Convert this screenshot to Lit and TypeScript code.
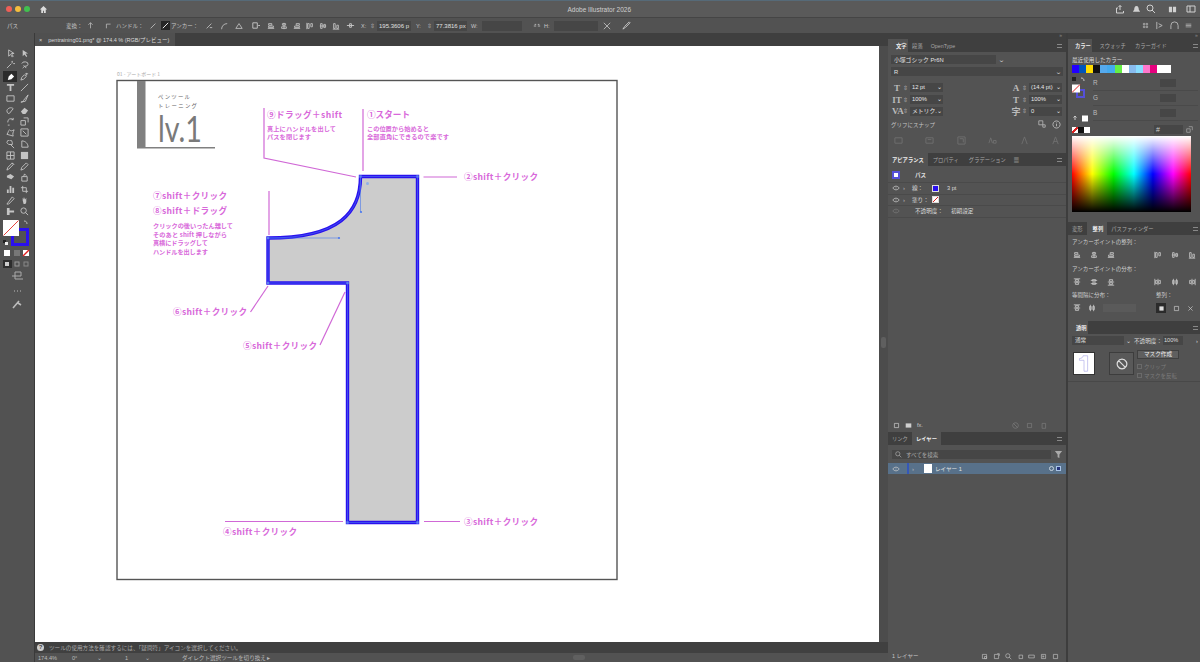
import {LitElement, html, css, svg} from 'lit';
import {customElement} from 'lit/decorators.js';

const icon = (d: string, size = 9, solid = false) => html`<svg class="ic ${solid ? 'solid' : ''}" viewBox="0 0 10 10" width=${size} height=${size}><path d=${d}></path></svg>`;
const EYE = 'M1 5c2-3 6-3 8 0-2 3-6 3-8 0zM4.500 5h1';

// tool pairs, top to bottom
const TOOLS: [string, boolean][] = [
  ['M3 1v7l2-2 2 3 1-1-2-3h3z', false], ['M3 1v7l2-2 2 3 1-1-2-3h3z', true],
  ['M1 9l5-5M7 1v2M8 4h2M6 2l1 1', false], ['M2 4a3.5 2.5 0 1 1 3 3l-2 2M4 6l3 3', false],
  ['M2 9l1-4 3-3 3 3-3 3z', true], ['M1 9l1-3 3-3 2 2-3 3zM7 1v3M6 2h3', false],
  ['M1 1h8v2H6v6H4V3H1z', true], ['M1 9L9 1', false],
  ['M1 2h8v6H1z', false], ['M1 9c2 0 3-1 3-2l5-6-3 7z', false],
  ['M1 5c1-3 5-4 7-2L4 8C3 9 1 8 1 5z', false], ['M1 6l4-4 4 3-3 4H3z', true],
  ['M2 6a3.5 3.5 0 0 1 6-3M8 1v2H6M2 9h2', false], ['M1 4h5v5H1zM4 1h5v5', false],
  ['M1 7c2-2 1-4 3-5 1 2 3 1 5 0-1 3-2 4-1 7-2-1-5-1-7-2z', false], ['M1 1h8v8H1zM3 3l4 4', false],
  ['M1 3a3 3 0 0 1 6 0v2H3zM5 5l4 4', false], ['M2 1c4 0 7 3 7 7H2z', false],
  ['M1 1h8v8H1zM1 5h8M5 1v8', false], ['M1 1h8v8H1z', true],
  ['M1 9l2-1 5-5-1-2-5 5zM7 1l2 2', false], ['M1 9l1-3 5-5 2 2-5 5z', false],
  ['M1 3l4-2 4 3-3 3-5-2zM4 7l4 2', true], ['M2 9h6V4H2zM4 4l1-3 2 2', false],
  ['M1 9V5h2v4zM4 9V1h2v8zM7 9V3h2v6z', true], ['M3 1v6h6M1 3h6v6', false],
  ['M1 9l6-8 2 2-6 6z', false], ['M3 5V2l1 2V1l1 3V1l1 3 1-2v5l-1 2H4z', true],
  ['M1 1h3v3h5v2H4v3H1z', true], ['M1 4a3 3 0 1 0 6 0 3 3 0 1 0-6 0M6 6l3 3', false],
];

const ALIGN: string[] = [
  'M1 8h8M2 2h4v2H2zM2 5h6v2H2z', 'M5 1v8M3 2h4v2H3zM2 6h6v2H2z', 'M1 8h8M4 2h4v2H4zM2 5h6v2H2z',
  'M1 1v8M2 2h2v6H2zM6 2h2v4H6z', 'M1 5h8M2 2h2v6H2zM6 3h2v4H6z', 'M1 9h8M2 2h2v6H2zM6 4h2v4H6z',
];
const DIST: string[] = [
  'M1 1h8M1 5h8M3 2h4v2H3zM3 6h4v2H3z', 'M1 3h8M1 7h8M3 2h4v2H3zM3 6h4v2H3z', 'M1 5h8M1 9h8M3 2h4v2H3zM3 6h4v2H3z',
  'M1 1v8M5 1v8M2 3h2v4H2zM6 3h2v4H6z', 'M3 1v8M7 1v8M2 3h2v4H2zM6 3h2v4H6z', 'M5 1v8M9 1v8M2 3h2v4H2zM6 3h2v4H6z',
];
const SWATCHES = ['#2200ff', '#0055bb', '#ffdd00', '#111111', '#55aaee', '#44aaee', '#66ee44', '#ffffff', '#88bbee', '#88ddff', '#ff77cc', '#e6007e', '#ffffff', '#ffffff'];

// pink notes on the artboard: x, baseline, width, size, text
const NOTES: [number, number, number, number, string][] = [
  [267, 118, 75, 8.6, '⑨ドラッグ＋shift'], [367, 118, 43, 8.6, '①スタート'],
  [267, 131, 69, 6.2, '真上にハンドルを出して'], [267, 139, 44, 6.2, 'パスを閉じます'],
  [367, 131, 62, 6.2, 'この位置から始めると'], [367, 139, 82, 6.2, '全部直角にできるので楽です'],
  [153, 199, 74, 8.6, '⑦shift＋クリック'], [153, 214, 74, 8.6, '⑧shift＋ドラッグ'],
  [153, 228, 80, 6.2, 'クリックの後いったん離して'], [153, 236.5, 74, 6.2, 'そのあと shift 押しながら'],
  [153, 245, 55, 6.2, '真横にドラッグして'], [153, 254, 55, 6.2, 'ハンドルを出します'],
  [173, 315, 74, 8.6, '⑥shift＋クリック'], [243, 349, 74, 8.6, '⑤shift＋クリック'],
  [223, 535, 74, 8.6, '④shift＋クリック'], [464, 525, 74, 8.6, '③shift＋クリック'], [464, 180, 74, 8.6, '②shift＋クリック'],
];
const LEADERS = ['M264 108V158L356 177', 'M363 109V171', 'M423.5 177H457', 'M269 191V235', 'M268 286L250.5 312', 'M345 292L320 345', 'M225 521.5H343', 'M424 521.5H460'];
const PATH_D = 'M360.5 176.5H417.5V522.5H347.5V283H268V238C340 238 360.5 212 360.5 176.5Z';

@customElement('app-root')
export class AppRoot extends LitElement {
  static styles = css`
    :host { display: block; width: 1200px; height: 662px; overflow: hidden; background: #535353; color: #d6d6d6;
      font: 5.5px "Liberation Sans", "Noto Sans CJK JP", sans-serif; }
    * { box-sizing: border-box; }
    .ic { display: block; flex: none; fill: none; stroke: currentColor; stroke-width: 1; }
    .ic.solid { fill: currentColor; stroke: none; }

    .titlebar { height: 17px; background: #5a5a5a; border-top: 1px solid #566a78; display: flex; align-items: center; padding-left: 4px; }
    .light { width: 6px; height: 6px; border-radius: 50%; margin: 0 1.6px; }
    .home { margin-left: 7px; color: #dcdcdc; }
    .title { flex: 1; text-align: center; font-size: 6.5px; color: #cfcfcf; padding-left: 36px; }
    .title-icons { display: flex; align-items: center; margin-right: 4px; color: #d0d0d0; }

    .control { height: 16px; background: #525252; border-top: 1px solid #454545; display: flex; align-items: center; padding-left: 7px; white-space: nowrap; color: #c8c8c8; }
    .c-icons { display: flex; align-items: center; gap: 4px; }
    .cf { height: 10px; background: #464646; color: #e0e0e0; padding: 0 2px; line-height: 10px; font-size: 6px; }
    .dark { background: #262626; color: #fff; }

    .main { display: flex; height: 629px; }
    .tools { width: 35px; background: #525252; border-right: 1px solid #3a3a3a; flex: none; display: flex; flex-direction: column; align-items: center; }
    .tool-grid { display: grid; grid-template-columns: 14px 14px; grid-auto-rows: 11.3px; margin-top: 15px; color: #c4c4c4; }
    .tool { display: flex; align-items: center; justify-content: center; }
    .tool.on { background: #2b2b2b; color: #fff; }

    .center { width: 853px; flex: none; display: flex; flex-direction: column; }
    .tabstrip { height: 13px; background: #3f3f3f; display: flex; }
    .doc-tab { width: 140px; background: #505050; display: flex; align-items: center; gap: 6px; padding-left: 4px; color: #d8d8d8; white-space: nowrap; font-size: 5.5px; }
    .canvas-wrap { flex: 1; display: flex; min-height: 0; }
    .canvas { width: 844px; height: 596px; background: #fff; display: block; flex: none; }
    .vscroll { flex: 1; background: #4c4c4c; display: flex; align-items: center; justify-content: center; padding-bottom: 4px; }
    .thumb { width: 5px; height: 11px; background: #5f5f5f; border-radius: 2px; }
    .help { height: 11px; background: #404040; display: flex; align-items: center; gap: 5px; padding-left: 2px; font-size: 5.6px; color: #aaa; flex: none; }
    .help-dot { width: 7px; height: 7px; border-radius: 50%; background: #cfcfcf; color: #404040; font-size: 6px; line-height: 7px; text-align: center; font-weight: 700; }
    .status { height: 9px; background: #525252; display: flex; align-items: center; font-size: 5.6px; color: #bbb; padding-left: 3px; flex: none; white-space: nowrap; }
    .hthumb { width: 12px; height: 5px; background: #606060; border-radius: 2px; margin-left: 303px; }

    .col1 { width: 180px; flex: none; display: flex; flex-direction: column; border-right: 2px solid #3d3d3d; background: #535353; }
    .col2 { flex: 1; display: flex; flex-direction: column; background: #535353; }
    .strip { height: 6px; background: #3f3f3f; flex: none; text-align: right; font-size: 5px; line-height: 5px; padding-right: 4px; color: #888; }
    .tabs { height: 13px; background: #3f3f3f; display: flex; align-items: stretch; flex: none; color: #a8a8a8; font-size: 5.3px; }
    .tab { padding: 0 4px; display: flex; align-items: center; white-space: nowrap; }
    .tab.on { background: #535353; color: #eee; font-weight: 700; }
    .tab.lead { padding-left: 8px; padding-right: 1.500px; }
    .menu { margin-left: auto; width: 5px; height: 4px; margin-top: 5px; margin-right: 4px; border-top: 1px solid #888; border-bottom: 1px solid #888; }

    .type-body { height: 101px; padding: 3px 3px 0; display: flex; flex-direction: column; }
    .select-row { display: flex; align-items: center; gap: 3px; margin-bottom: 3px; }
    .select { height: 9px; background: #464646; color: #e2e2e2; display: flex; align-items: center; padding: 0 2px 0 3px; font-size: 5.8px; justify-content: space-between; white-space: nowrap; }
    .chev { color: #ccc; font-size: 6px; line-height: 6px; transform: scaleX(1.4); }
    .m-row { height: 11.7px; display: flex; align-items: center; }
    .m-icon { width: 10px; margin-left: 1px; font: 700 9px "Liberation Serif", "Noto Sans CJK JP", serif; color: #bbb; text-align: center; white-space: nowrap; }
    .step { width: 6px; margin: 0 1px; color: #bbb; }
    .m-field { width: 33px; height: 9px; background: #464646; color: #e8e8e8; font-size: 5.8px; line-height: 9px; padding: 0 1px 0 2px; display: flex; justify-content: space-between; white-space: nowrap; }
    .m-spacer { width: 67px; flex: none; }
    .snap { height: 13px; margin-top: 1px; display: flex; align-items: center; justify-content: space-between; padding: 0 2px 0 0; color: #c4c4c4; }
    .snap-icons { display: flex; gap: 6px; color: #bbb; }
    .glyphs { display: flex; justify-content: space-between; margin-top: 5px; color: #717171; padding: 0 3px; }

    .appearance { height: 266px; flex: none; display: flex; flex-direction: column; }
    .a-row { height: 11.5px; display: flex; align-items: center; border-bottom: 1px solid #4a4a4a; padding-left: 4px; color: #dcdcdc; font-size: 5.6px; white-space: nowrap; }
    .a-first { height: 15px; margin-top: 2px; }
    .eye { width: 8px; color: #c8c8c8; flex: none; }
    .eye.off { color: #777; }
    .twist { width: 6px; margin-left: 3px; color: #bbb; font-size: 6px; flex: none; }
    .swatch-sm { width: 7px; height: 7px; border: 1px solid #ddd; flex: none; }
    .a-label-s { width: 20px; margin-left: 3px; flex: none; }
    .a-foot { margin-top: auto; height: 14px; display: flex; align-items: center; padding: 0 5px; gap: 5px; color: #cfcfcf; }
    .trash { margin-left: auto; display: flex; gap: 7px; margin-right: 14px; color: #7c7c7c; }

    .layers { flex: 1; display: flex; flex-direction: column; min-height: 0; }
    .search { height: 9px; margin: 5px 3px 4px 4px; display: flex; align-items: center; gap: 3px; font-size: 5.5px; color: #aaa; }
    .search-box { flex: 1; height: 9px; background: #464646; display: flex; align-items: center; gap: 4px; padding-left: 3px; }
    .layer { height: 11px; background: #58718a; display: flex; align-items: center; color: #e2e2e2; font-size: 5.6px; padding-left: 4px; }
    .layer-bar { width: 2px; height: 11px; background: #3557b8; margin-left: 7px; }
    .thumb-sm { width: 8px; height: 9px; background: #fff; margin: 0 3px 0 6px; }
    .target { margin-left: auto; width: 5px; height: 5px; border-radius: 50%; border: 1px solid #c8d4e0; margin-right: 2px; }
    .sel { width: 5px; height: 5px; background: #26357d; border: 1px solid #a9c4e8; margin-right: 5px; }
    .l-foot { margin-top: auto; height: 12px; display: flex; align-items: center; padding-left: 4px; color: #c8c8c8; font-size: 5.5px; }
    .l-foot-icons { display: flex; gap: 4.700px; margin-left: 63px; color: #bbb; }

    .color-body { height: 170px; padding: 3px 4px 0; display: flex; flex-direction: column; }
    .recent { height: 10px; line-height: 10px; font-size: 5.6px; color: #d8d8d8; }
    .swatches { display: flex; margin-bottom: 3px; }
    .sw { width: 7.1px; height: 7.5px; flex: none; }
    .rgb { display: flex; height: 50px; }
    .rgb-rows { flex: 1; display: grid; grid-auto-rows: 15px; margin-left: 5px; }
    .rgb-row { display: flex; align-items: center; justify-content: space-between; color: #bbb; font-size: 6.4px; border-bottom: 1px solid #4a4a4a; }
    .rgb-val { width: 16px; height: 8px; background: #464646; margin-right: 22px; }
    .hex { display: flex; align-items: center; height: 8px; }
    .hex-f { width: 29px; height: 9px; background: #464646; margin-left: 64px; color: #ccc; font-size: 7px; line-height: 9px; padding-left: 2px; }
    .picker { height: 76px; width: 119px; margin-top: 2px; background: linear-gradient(to bottom, #fff 0, rgba(255,255,255,0) 50%, rgba(0,0,0,0) 50%, #000 100%), linear-gradient(to right, #f00, #ff0 17%, #0f0 35%, #0ff 52%, #00f 68%, #f0f 85%, #f00); }

    .align-body { height: 86px; padding: 2px 4px 0; color: #cfcfcf; font-size: 5.5px; }
    .a-label { height: 10px; line-height: 10px; white-space: nowrap; }
    .a-icons { height: 16px; display: flex; align-items: center; gap: 9px; padding-left: 1px; color: #c8c8c8; }
    .a-gap { width: 21px; flex: none; }
    .dist-row { height: 16px; display: flex; align-items: center; gap: 7px; padding-left: 1px; color: #c8c8c8; }
    .dist-fake { width: 33px; height: 8px; background: #5a5a5a; flex: none; }
    .dist-on { width: 10px; height: 10px; background: #2b2b2b; display: flex; align-items: center; justify-content: center; color: #ddd; margin-left: 13px; flex: none; }

    .opacity { height: 48px; padding: 1px 4px 0; font-size: 5.6px; color: #ddd; border-bottom: 1px solid #484848; }
    .o-row { height: 9px; display: flex; align-items: center; white-space: nowrap; }
    .o-select { width: 52px; padding-left: 3px; background: #464646; flex: none; height: 9px; line-height: 9px; }
    .o-val { background: #464646; width: 20px; height: 9px; line-height: 9px; padding-left: 1px; margin-left: 1px; }
    .o-main { display: flex; margin-top: 7px; }
    .o-thumb { width: 22px; height: 23px; background: #fff; flex: none; border: 1px solid #333; margin-left: 1px; }
    .o-mask { width: 25px; height: 23px; background: #595959; border: 1px solid #3d3d3d; margin: 0 3px 0 14px; display: flex; align-items: center; justify-content: center; flex: none; color: #ddd; }
    .o-btn { width: 42px; height: 9px; background: #5f5f5f; border: 1px solid #404040; text-align: center; line-height: 7px; font-size: 5.6px; color: #eee; margin-top: -2px; margin-bottom: 3px; }
    .o-check { display: flex; align-items: center; gap: 2px; color: #7b7b7b; font-size: 5.5px; height: 9px; white-space: nowrap; }
    .o-box { width: 5px; height: 5px; border: 1px solid #6a6a6a; flex: none; }
  `;

  private renderArtboard() {
    return html`<svg class="canvas" viewBox="35 46 844 596" font-family="'Noto Sans CJK JP', sans-serif">
      <text x="117" y="76" font-size="5" fill="#aaa">01 - アートボード 1</text>
      <rect x="117" y="80.5" width="500" height="499" fill="#fff" stroke="#555" stroke-width="1.4"></rect>
      <rect x="137" y="81" width="8.5" height="67" fill="#808080"></rect>
      <rect x="137" y="147" width="78" height="1.5" fill="#808080"></rect>
      <text x="158" y="98.500" font-size="5.4" fill="#666" textLength="32">ペンツール</text>
      <text x="158" y="107.500" font-size="5.4" fill="#666" textLength="39">トレーニング</text>
      <text x="158" y="142" font-family="Lato, sans-serif" font-size="37" fill="#7a7a7a" textLength="44" lengthAdjust="spacingAndGlyphs">lv.1</text>
      ${LEADERS.map(d => svg`<path d=${d} fill="none" stroke="#d068d6" stroke-width="1.2"></path>`)}
      ${NOTES.map(([x, y, w, size, t]) => svg`<text x=${x} y=${y} font-size=${size} font-weight="700" fill="#d868da" textLength=${w}>${t}</text>`)}
      <path d=${PATH_D} fill="#cccccc" stroke="#2a10ee" stroke-width="3.4"></path>
      <path d=${PATH_D} fill="none" stroke="#4a78ee" stroke-width="0.6"></path>
      <path d="M268 238H339M360.5 177V212" stroke="#4a78ee" stroke-width="0.6" fill="none"></path>
      <circle cx="339" cy="238" r="1.1" fill="#4a78ee"></circle>
      <circle cx="361" cy="212" r="1.1" fill="#4a78ee"></circle>
      <circle cx="367.5" cy="183.5" r="1.5" fill="#8fb0e8"></circle>
      ${[[360.5, 176.5], [417.5, 176.5], [417.5, 522.5], [347.5, 522.5], [347.5, 283], [268, 283], [268, 238]].map(([x, y]) =>
        svg`<rect x=${x - 1.2} y=${y - 1.2} width="2.4" height="2.4" fill="#5a80ee"></rect>`)}
    </svg>`;
  }

  private renderTools() {
    return html`<div class="tools">
      <div class="tool-grid">
        ${TOOLS.map(([d, solid], i) => html`<div class="tool ${i === 4 ? 'on' : ''}">${icon(d, 9, solid)}</div>`)}
      </div>
      <svg width="34" height="100" viewBox="0 218 34 100" style="flex:none;margin-top:1px">
        <rect x="12.5" y="229.5" width="15" height="15" fill="none" stroke="#2a10ee" stroke-width="3"></rect>
        <rect x="3" y="220" width="16" height="16" fill="#fff"></rect>
        <path d="M3.5 235.5L18.5 220.5" stroke="#e8413c" stroke-width="1"></path>
        <path d="M24 221c2 0 3 1 3 3" stroke="#bbb" fill="none"></path>
        <rect x="3" y="240" width="3" height="3" fill="#222"></rect><rect x="5" y="242" width="3" height="3" fill="#eee"></rect>
        <rect x="4" y="250" width="6" height="6" fill="#fff"></rect>
        <rect x="14" y="250" width="6" height="6" fill="#777"></rect>
        <rect x="23" y="250" width="6" height="6" fill="#fff"></rect>
        <path d="M23 256l6-6" stroke="#e02020" stroke-width="1.4"></path>
        <rect x="3" y="260" width="9" height="8" fill="#2d2d2d"></rect>
        <rect x="5" y="262" width="4" height="4" fill="#ccc"></rect>
        <rect x="15" y="262" width="4" height="4" fill="none" stroke="#999"></rect>
        <rect x="24" y="262" width="4" height="4" fill="none" stroke="#888"></rect>
        <path d="M12 276h9v-4h-6v7h8" fill="none" stroke="#aaa"></path>
        <path d="M14 291h1M17 291h1M20 291h1" stroke="#bbb"></path>
        <path d="M13 308l6-7M18 303l3 2" stroke="#bbb" stroke-width="1.6"></path>
      </svg>
    </div>`;
  }

  private renderCenter() {
    return html`<div class="center">
      <div class="tabstrip"><div class="doc-tab"><span>×</span><span>pentraining01.png* @ 174.4 % (RGB/プレビュー)</span></div></div>
      <div class="canvas-wrap">${this.renderArtboard()}<div class="vscroll"><div class="thumb"></div></div></div>
      <div class="help"><span class="help-dot">?</span><span>ツールの使用方法を確認するには、「疑問符」アイコンを選択してください。</span></div>
      <div class="status"><span style="width:34px">174.4%</span><span style="width:25px">0°</span><span style="width:28px">⌄</span><span style="width:20px">1</span><span style="width:37px">⌄</span>
        <span style="width:85px">ダイレクト選択ツールを切り換え</span><span>▸</span><span class="hthumb"></span></div>
    </div>`;
  }

  private measure(a: string, av: string, b: string, bv: string) {
    return html`<div class="m-row">
      <span class="m-icon">${a}</span><span class="step">⇳</span><span class="m-field"><span>${av}</span><span>⌄</span></span>
      <span class="m-spacer"></span>
      <span class="m-icon">${b}</span><span class="step">⇳</span><span class="m-field"><span>${bv}</span><span>⌄</span></span>
    </div>`;
  }

  private renderCol1() {
    return html`<div class="col1">
      <div class="strip">»</div>
      <div class="tabs"><div class="tab on lead">文字</div><div class="tab">段落</div><div class="tab">OpenType</div><div class="menu"></div></div>
      <div class="type-body">
        <div class="select-row"><div class="select" style="width:105px"><span>小塚ゴシック Pr6N</span></div><span class="chev">⌄</span></div>
        <div class="select" style="margin-bottom:6px;width:172px"><span>R</span><span class="chev">⌄</span></div>
        ${this.measure('T', '12 pt', 'A', '(14.4 pt)')}
        ${this.measure('IT', '100%', 'T', '100%')}
        ${this.measure('VA', 'メトリク.', '字', '0')}
        <div class="snap"><span>グリフにスナップ</span><span class="snap-icons">${icon('M1 1h5v5H1zM6 6h3v3H6z', 8)}${icon('M5 1a4 4 0 1 0 .01 0M5 4v3M5 2.5v.5', 9)}</span></div>
        <div class="glyphs">
          ${['M1 2h8v6H1z', 'M1 2h8v6H1zM3 4h4', 'M1 1h8v8H1zM3 3h4v4', 'M1 8l2-6 2 6M6 8h3V5H6z', 'M2 9l3-8 3 8', 'M2 9l3-8 3 8M3 6h4'].map(d => icon(d, 9))}
        </div>
      </div>
      <div class="tabs"><div class="tab on">アピアランス</div><div class="tab" style="padding-left:5px">プロパティ</div><div class="tab" style="padding-left:6px">グラデーション</div><div class="tab">▦</div><div class="menu"></div></div>
      <div class="appearance">
        <div class="a-row a-first"><span class="swatch-sm" style="width:8px;height:8px;background:#fff;border:2px solid #5550d8"></span><span style="margin-left:15px;font-weight:700">パス</span></div>
        <div class="a-row"><span class="eye">${icon(EYE, 8)}</span><span class="twist">›</span><span class="a-label-s">線：</span>
          <span class="swatch-sm" style="background:#2a10ee"></span><span style="margin-left:8px">3 pt</span></div>
        <div class="a-row"><span class="eye">${icon(EYE, 8)}</span><span class="twist">›</span><span class="a-label-s">塗り：</span>
          <span class="swatch-sm" style="background:linear-gradient(135deg,#fff 44%,#d22 44%,#d22 56%,#fff 56%)"></span></div>
        <div class="a-row"><span class="eye off">${icon(EYE, 8)}</span><span style="margin-left:15px">不透明度：</span><span style="margin-left:8px">初期設定</span></div>
        <div class="a-foot">${icon('M2 2h6v6H2z', 7)}${icon('M1 2h8v6H1z', 7, true)}<span>fx.</span>
          <span class="trash">${icon('M5 1a4 4 0 1 0 .01 0M2 2l6 6', 7)}${icon('M2 2h6v6H2z', 7)}${icon('M3 2h5v7H3z', 7)}</span></div>
      </div>
      <div class="tabs"><div class="tab">リンク</div><div class="tab on">レイヤー</div><div class="menu"></div></div>
      <div class="layers">
        <div class="search"><div class="search-box">${icon('M1 4a3 3 0 1 0 6 0 3 3 0 1 0-6 0M6 6l3 3', 7)}<span>すべてを検索</span></div>${icon('M1 1h8L6 5v4L4 8V5z', 9, true)}</div>
        <div class="layer"><span class="eye">${icon(EYE, 8)}</span><span class="layer-bar"></span><span class="twist">›</span><span class="thumb-sm"></span><span>レイヤー 1</span><span class="target"></span><span class="sel"></span></div>
        <div class="l-foot"><span>1 レイヤー</span>
          <span class="l-foot-icons">${['M2 2h6v6H2zM5 5h3v3H5z', 'M2 2h6v6H2zM6 1l3 0v3', 'M1 4a3 3 0 1 0 6 0 3 3 0 1 0-6 0M6 6l3 3', 'M3 3h5v5H3z', 'M1 3h8v4H1z', 'M2 2h6v6H2zM4 4l2 1-2 1z', 'M2 2h6v6H2z'].map(d => icon(d, 7))}</span></div>
      </div>
    </div>`;
  }

  private renderCol2() {
    return html`<div class="col2">
      <div class="strip">»</div>
      <div class="tabs"><div class="tab on lead" style="padding-left:7px">カラー</div><div class="tab" style="padding-left:7px">スウォッチ</div><div class="tab" style="padding-left:5px">カラーガイド</div><div class="menu"></div></div>
      <div class="color-body">
        <div class="recent">最近使用したカラー</div>
        <div class="swatches">${SWATCHES.map(c => html`<span class="sw" style="background:${c}"></span>`)}</div>
        <div class="rgb">
          <svg width="16" height="50" viewBox="0 0 16 50" style="flex:none">
            <rect x="5" y="14" width="7" height="7" fill="none" stroke="#5550d8" stroke-width="2"></rect>
            <rect x="0" y="8.500" width="8" height="8" fill="#fff"></rect>
            <path d="M0 16.500l8-8" stroke="#e02020"></path>
            <rect x="0" y="1" width="4" height="4" fill="#222"></rect>
            <path d="M9 2c2 0 3 1 3 3" stroke="#ccc" fill="none"></path>
            <path d="M3 44v-4M1.500 41.500L3 40l1.500 1.500" stroke="#ccc" fill="none"></path>
            <rect x="10" y="39.500" width="6" height="6" fill="#fff"></rect>
          </svg>
          <div class="rgb-rows">
            <div class="rgb-row"><span>R</span><span class="rgb-val"></span></div>
            <div class="rgb-row"><span>G</span><span class="rgb-val"></span></div>
            <div class="rgb-row"><span>B</span><span class="rgb-val"></span></div>
          </div>
        </div>
        <div class="hex">
          <span class="sw" style="width:6px;height:6px;background:linear-gradient(135deg,#fff 40%,#d22 40%,#d22 60%,#fff 60%)"></span>
          <span class="sw" style="width:6px;height:6px;background:#111"></span>
          <span class="sw" style="width:6px;height:6px;background:#fff"></span>
          <span class="hex-f">#</span>
          <span style="margin-left:3px;color:#aaa">${icon('M1 4h5v5H1zM4 1h5v5', 7)}</span>
        </div>
        <div class="picker"></div>
      </div>
      <div class="tabs"><div class="tab">変形</div><div class="tab on" style="padding-left:6px">整列</div><div class="tab">パスファインダー</div><div class="menu"></div></div>
      <div class="align-body">
        <div class="a-label">アンカーポイントの整列：</div>
        <div class="a-icons">${ALIGN.slice(0, 3).map(d => icon(d, 8))}<span class="a-gap"></span>${ALIGN.slice(3).map(d => icon(d, 8))}</div>
        <div class="a-label" style="margin-top:1px">アンカーポイントの分布：</div>
        <div class="a-icons">${DIST.slice(0, 3).map(d => icon(d, 8))}<span class="a-gap"></span>${DIST.slice(3).map(d => icon(d, 8))}</div>
        <div class="a-label" style="display:flex"><span style="width:84px">等間隔に分布：</span><span>整列：</span></div>
        <div class="dist-row">${icon(DIST[0], 8)}${icon(DIST[4], 8)}<span class="dist-fake"></span>
          <span class="dist-on">${icon('M2 2h6v6H2z', 7, true)}</span>${icon('M2 2h6v6H2z', 7)}${icon('M2 2l6 6M8 2L2 8', 7)}</div>
      </div>
      <div class="tabs"><div class="tab on lead">透明</div><div class="menu"></div></div>
      <div class="opacity">
        <div class="o-row" style="margin-top:1px"><span class="o-select">通常</span><span style="margin-left:2px">⌄</span><span style="margin-left:3px">不透明度：</span><span class="o-val">100%</span><span style="margin-left:13px">›</span></div>
        <div class="o-main">
          <div class="o-thumb"><svg viewBox="0 0 22 23" width="20" height="21"><path d="M10 3h5v17h-4V8H6V6c2 0 4-1 4-3z" fill="none" stroke="#a8a6e8" stroke-width="0.7"></path></svg></div>
          <div class="o-mask">${icon('M5 1a4 4 0 1 0 .01 0M2.2 2.2l5.6 5.6', 12)}</div>
          <div><div class="o-btn">マスク作成</div>
            <div class="o-check"><span class="o-box"></span>クリップ</div>
            <div class="o-check"><span class="o-box"></span>マスクを反転</div></div>
        </div>
      </div>
    </div>`;
  }

  render() {
    return html`
      <div class="titlebar">
        <span class="light" style="background:#ee5f57"></span><span class="light" style="background:#f5bd3d"></span><span class="light" style="background:#41c04f"></span>
        <span class="home">${icon('M5 1L1 5h1.5v4h2V6.5h1V9h2V5H9z', 9, true)}</span>
        <span class="title">Adobe Illustrator 2026</span>
        <span class="title-icons">
          ${icon('M3 4H1.500v5h7V7M5 6V1.500M3.500 3L5 1.500 6.500 3', 10)}<span style="width:6.500px"></span>${icon('M5 1c2 0 2.500 2 2.500 4L9 7.500H1L2.500 5C2.500 3 3 1 5 1z', 9, true)}<span style="width:5.500px"></span>${icon('M1 4a3 3 0 1 0 6 0 3 3 0 1 0-6 0M6 6l3 3', 10)}
          <span style="width:11.500px"></span>${icon('M1 2h3.500v6H1zM5.500 2H9v6H5.500z', 9, true)}<span style="width:9.500px"></span>${icon('M1 2h8v6H1zM4 2v6', 10)}
        </span>
      </div>
      <div class="control">
        <span style="width:59px">パス</span><span style="width:18px">変換：</span>
        <span class="c-icons" style="width:29px;gap:11px;margin-left:3px">${icon('M5 1v8M2 4l3-3 3 3', 7)}${icon('M2 9V3h6', 7)}</span>
        <span style="width:33px">ハンドル：</span>
        <span class="c-icons">${icon('M2 8l6-6', 8)}<span class="dark">${icon('M2 8l6-6', 9)}</span></span>
        <span style="width:34px;margin-left:1px">アンカー：</span>
        <span class="c-icons" style="gap:7px">${icon('M2 8l6-6M6 7h3', 8)}${icon('M2 9c0-4 3-7 7-7', 8)}${icon('M1 8l4-6 4 6z', 8)}</span>
        <span style="width:8px"></span>${icon('M2 2h5v6H2zM8 5h2', 9)}<span style="width:7px"></span>
        <span class="c-icons" style="gap:5px">${ALIGN.map(d => icon(d, 8))}</span>
        <span style="width:6px"></span>${icon('M1 5h8M4 3h2v4H4z', 9)}
        <span style="margin-left:6px;width:8px">X:</span><span class="step" style="margin:0 1px 0 1px">⇳</span><span class="cf" style="width:34px">195.3606 p</span>
        <span style="margin-left:5px;width:8px">Y:</span><span class="step" style="margin:0 1px 0 3px">⇳</span><span class="cf" style="width:33px">77.3816 px</span>
        <span style="margin-left:4px;width:11px">W:</span><span class="cf" style="width:40px"></span>
        <span style="margin-left:11px;width:11px">${icon('M1 5h3M6 5h3M2 3h2M6 3h2', 8)}</span><span style="width:10px">H:</span><span class="cf" style="width:44px"></span>
        <span style="margin-left:5px">${icon('M1 1l8 8M9 1L1 9', 8)}</span><span style="margin-left:11px">${icon('M1 9l2-3 5-5 1 1-5 5z', 9)}</span>
        <span style="margin-left:auto;display:flex;gap:6px;align-items:center;margin-right:8px;color:#bbb">${icon('M2 2h2v2H2zM6 2h2v2H6zM2 6h2v2H2zM6 6h2v2H6z', 7)}${icon('M2 1v8M4 3l4 2-4 2', 9)}${icon('M1 9V5a4 4 0 0 1 8 0v4', 9)}${icon('M1 3h8M1 5h8M1 7h8', 7)}</span>
      </div>
      <div class="main">
        ${this.renderTools()}
        ${this.renderCenter()}
        ${this.renderCol1()}
        ${this.renderCol2()}
      </div>
    `;
  }
}
